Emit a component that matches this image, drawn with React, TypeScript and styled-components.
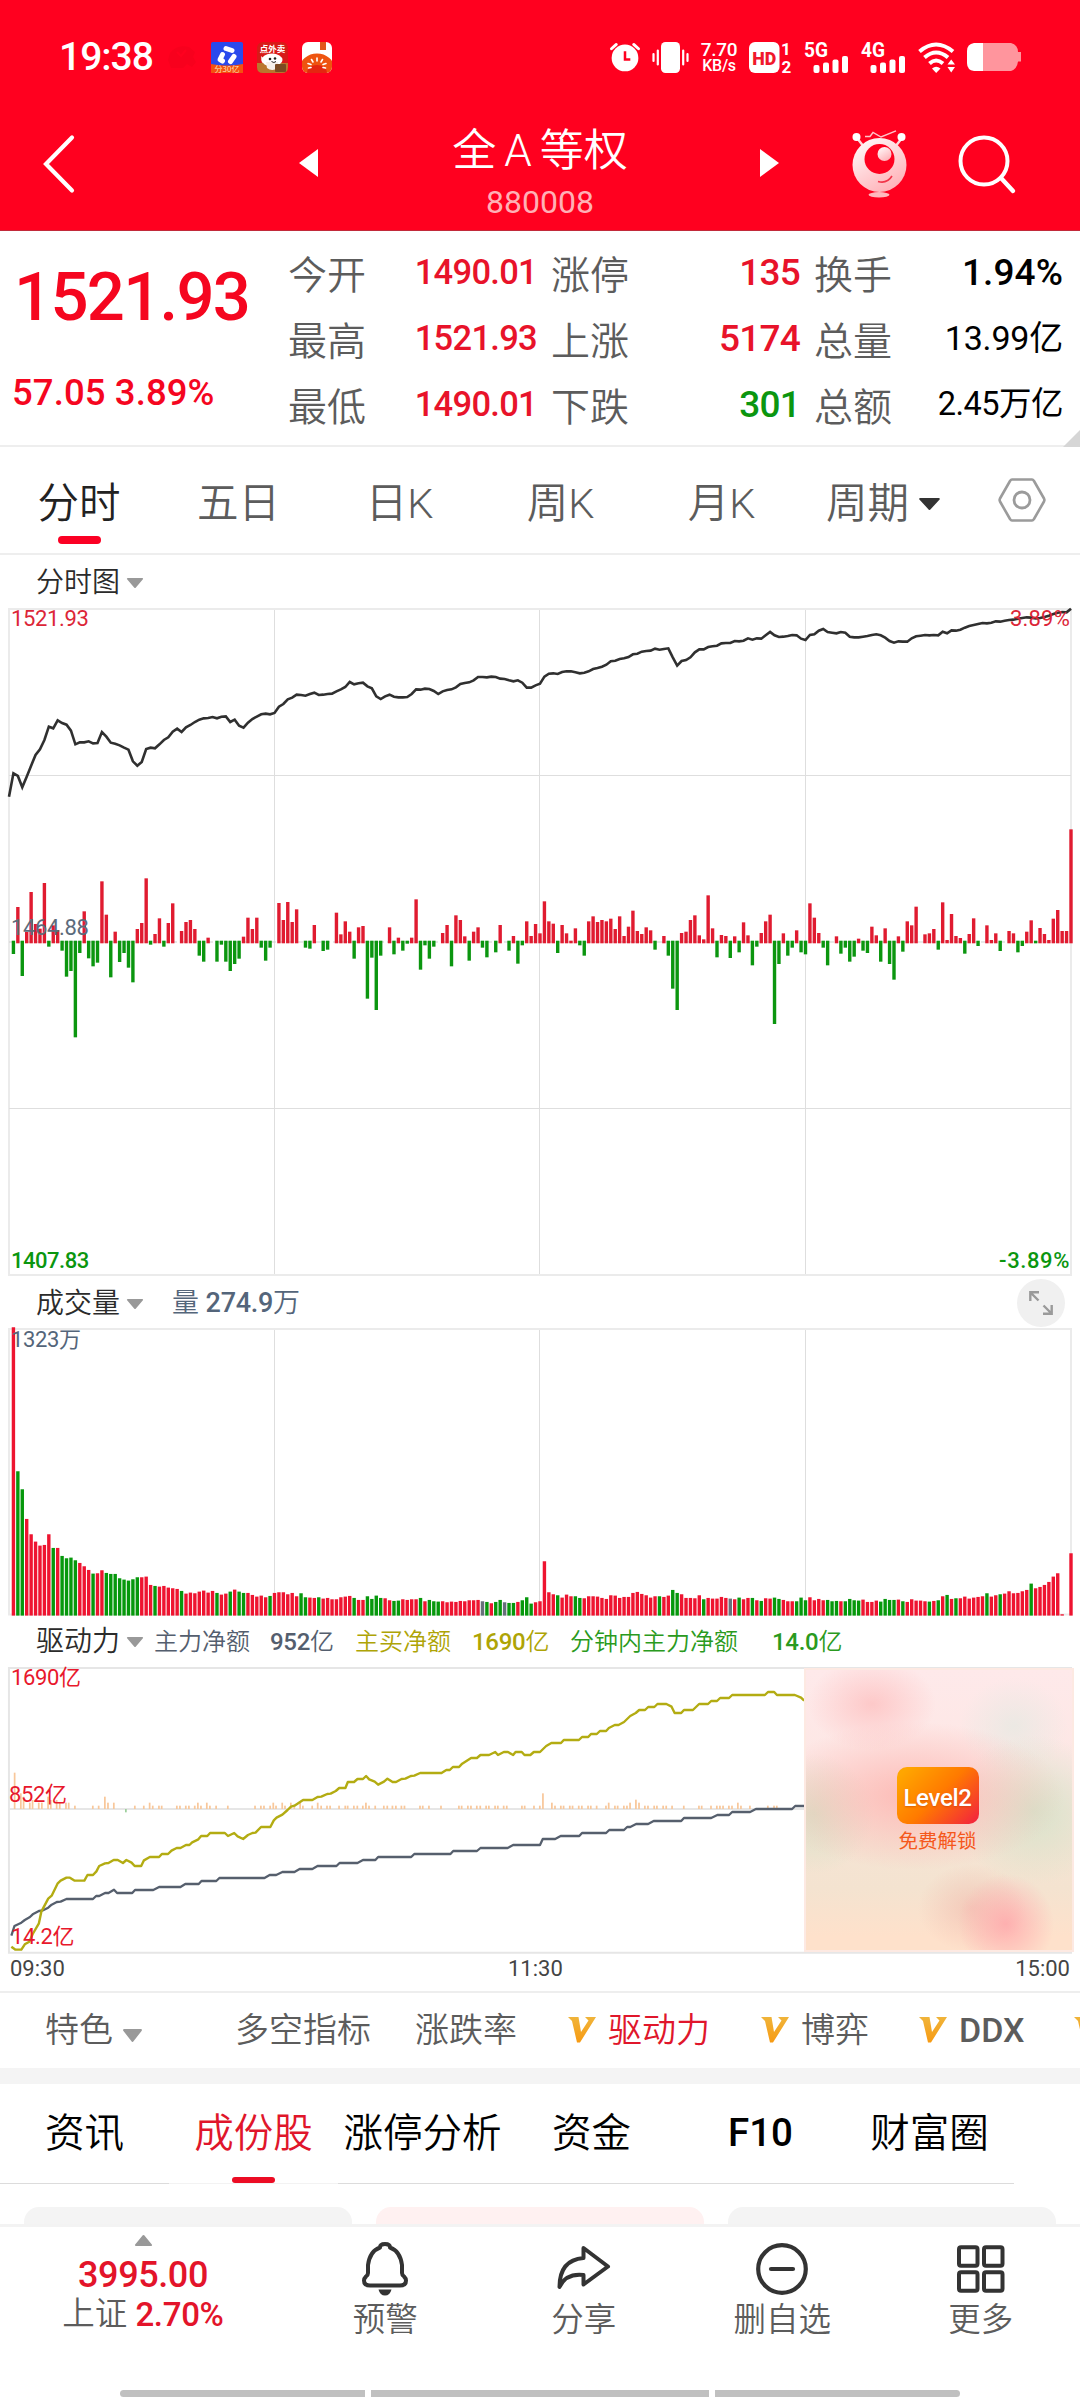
import React from "react";
import styled, { createGlobalStyle } from "styled-components";

const RED = "#e8132a";
const GREEN = "#0b960f";
const SLATE = "#54657a";

/* ------------------------------- chart data ------------------------------- */

const WIDTH = 1080;
const LEFT = 9;
const RIGHT = 1071;
const STEP = (RIGHT - LEFT) / 240;
const minuteX = (i: number) => LEFT + STEP * i;

const PRICE = [
  740, 670, 678, 712, 680, 647, 615, 598, 570, 530, 535, 511, 519, 524, 542, 583, 577, 577, 574, 580,
  579, 546, 560, 578, 581, 586, 593, 599, 634, 647, 636, 597, 593, 595, 583, 570, 562, 545, 536, 546,
  532, 525, 516, 509, 505, 504, 501, 505, 500, 499, 516, 509, 527, 533, 518, 507, 500, 493, 491, 493,
  489, 470, 462, 448, 443, 434, 435, 437, 432, 428, 435, 434, 432, 431, 424, 418, 411, 396, 403, 400,
  398, 409, 415, 439, 447, 439, 434, 440, 442, 442, 441, 432, 418, 419, 416, 417, 423, 432, 424, 420,
  418, 412, 402, 399, 397, 391, 381, 381, 382, 380, 381, 386, 387, 391, 394, 391, 398, 413, 413, 406,
  401, 380, 371, 370, 372, 366, 364, 364, 367, 370, 368, 364, 357, 354, 350, 344, 334, 332, 327, 325,
  321, 313, 311, 305, 303, 302, 296, 299, 297, 295, 322, 347, 333, 330, 322, 307, 298, 298, 291, 289,
  287, 280, 279, 279, 273, 274, 272, 265, 269, 265, 266, 256, 246, 256, 261, 260, 258, 255, 256, 266,
  270, 255, 253, 242, 237, 246, 248, 250, 246, 248, 260, 262, 262, 260, 258, 255, 253, 256, 263, 273,
  278, 274, 275, 275, 265, 259, 257, 255, 256, 255, 256, 245, 250, 241, 242, 239, 233, 228, 225, 222,
  219, 220, 218, 214, 215, 212, 210, 209, 206, 204, 202, 203, 205, 204, 201, 197, 192, 188, 186, 187,
  176,
];

const MOMENTUM = [
  0, -36, 105, -102, 30, 150, 54, 40, 177, -14, 50, 36, -26, -104, -87, -286, -33, 92, -49, -73,
  -62, 182, 82, -106, 31, -60, -33, -77, -121, 39, 57, 191, -8, 24, 71, -14, 57, 116, 0, 33,
  60, 66, 39, -41, -59, 13, 0, -59, -8, -59, -87, -66, -50, 16, 73, 39, 73, -17, -56, -17,
  0, 117, 66, 120, 60, 98, 0, -17, -20, 51, 0, -27, -23, 0, 88, 23, 62, 31, -50, 44,
  48, -170, -47, -204, -41, 0, 44, -37, 13, -26, -5, 13, 128, -83, -10, -50, -14, 0, 27, 51,
  -73, 80, 66, 17, -56, 31, 44, -17, -46, 0, -31, 51, 0, -26, 18, -65, -10, 62, 18, 54,
  26, 122, 62, 55, -33, 51, 26, 4, 41, -10, -41, 62, 77, 60, 66, 62, 70, 39, 77, 18,
  46, 94, 33, 24, 44, 35, -23, 0, 18, -41, -140, -204, 27, 31, 66, 80, 20, 8, 140, 41,
  -46, 21, 18, -48, 17, -31, 59, 20, -70, -14, 27, 62, 82, -246, -66, 26, -41, -17, 35, -31,
  -37, 116, 73, 27, -17, -70, 0, 17, -35, -17, -59, -44, 10, -26, -33, 46, 20, -59, 41, -66,
  -113, 17, -29, 62, 50, 106, 0, 23, 26, 39, -23, 119, 6, 84, 18, 12, -35, 24, 71, -12,
  0, 50, 6, 26, -27, 0, 33, 26, -31, -12, 31, 65, -4, 42, 24, 6, 70, 96, 33, 33,
  338,
];

const VOLUME =
  "r865 g433 g379 r290 r244 r222 r210 r212 r244 g203 r203 g179 g172 g174 g166 r158 r148 r137 g126 r127 " +
  "r136 g128 g125 g125 g112 g108 g105 g109 g115 r115 r117 r92 g89 r87 r89 r84 r82 r80 g74 r66 " +
  "r69 r67 r72 r75 r69 r74 g68 r63 r66 g72 r78 g72 g68 r68 r62 r57 r60 r55 g59 r68 " +
  "r70 r70 r64 r68 r58 g67 g55 r54 r53 g55 r51 r53 r49 r49 r55 r57 r59 g53 r47 r47 " +
  "g58 g50 g60 g53 r52 r46 g44 g45 r49 r47 r49 r49 g53 r43 g47 g43 g42 r43 r40 r42 " +
  "r41 r44 r43 r46 r46 r47 n43 g41 r37 g41 g47 n40 g38 g38 r41 g46 g55 g36 r40 r43 " +
  "r163 r70 r64 g61 r54 r63 r58 g58 g53 r52 r58 r58 r57 r53 r50 r61 r60 r53 r56 r56 " +
  "r68 r71 r65 r61 r54 r58 g58 r56 r60 g77 g68 r64 r53 r53 r52 r61 g49 r53 r51 r51 " +
  "r56 r53 n51 r49 g54 r49 r53 g53 r46 g44 r52 r51 g54 g50 r47 r43 r43 g43 g54 g46 " +
  "r55 r46 r50 r46 g47 g43 g44 r43 g43 g50 g46 g45 r48 r41 r41 r45 g42 g50 g47 g47 " +
  "r48 g43 r41 r49 r45 r45 r43 g42 r44 g46 r58 g62 r50 g52 r52 r57 r51 r54 r56 r58 " +
  "g67 r57 r61 g64 r66 r73 r67 r68 r73 r77 g96 r82 r86 r92 r101 r117 r127 r4 r0 r187";

const MAIN_BUY =
  "33,1010 45,1019 62,1019 72,1003 85,995 95,972 113,940 120,905 140,866 150,857 167,821 176,812 193,803 203,803 217,812 245,812 254,795 270,795 280,784 288,768 305,760 315,759 330,750 342,750 357,759 367,750 382,758 391,768 410,768 418,751 435,741 462,741 470,732 488,732 498,722 513,714 524,714 540,705 550,705 558,697 576,688 584,678 602,678 610,669 653,669 662,678 680,669 690,679 706,687 720,675 733,669 742,668 758,651 785,651 795,631 803,623 820,614 835,600 845,590 855,587 880,570 907,570 922,561 933,560 950,552 960,551 975,543 985,534 1003,534 1010,516 1028,516 1038,507 1054,507 1063,498 1072,508 1088,515 1098,524 1115,515 1125,506 1140,516 1150,516 1166,507 1177,506 1193,498 1203,497 1220,489 1282,489 1296,480 1306,480 1315,471 1333,471 1342,461 1368,444 1385,444 1395,435 1420,435 1438,426 1446,435 1463,426 1475,426 1490,435 1497,426 1515,426 1523,435 1540,435 1550,426 1568,426 1586,408 1601,399 1629,399 1637,390 1681,390 1690,381 1708,381 1716,372 1733,372 1742,363 1760,363 1768,354 1785,345 1796,345 1812,336 1830,318 1846,309 1856,300 1873,300 1882,291 1900,291 1909,282 1935,282 1950,290 1959,309 1978,309 1986,300 2012,300 2030,282 2056,282 2065,273 2082,273 2091,264 2117,264 2126,255 2221,255 2230,246 2248,246 2256,255 2308,255 2326,263 2335,272";

const MAIN_FLOW =
  "33,977 42,948 62,938 72,930 87,921 95,913 113,903 125,901 140,893 150,884 165,876 176,875 193,867 270,867 279,858 288,858 305,849 315,849 331,839 340,849 384,849 392,840 445,840 462,831 524,831 538,822 577,822 585,813 628,813 637,804 768,804 783,795 802,795 820,786 855,786 870,777 907,777 922,768 977,768 986,759 1038,759 1054,750 1090,750 1098,741 1194,741 1203,732 1308,732 1316,723 1385,723 1395,714 1474,714 1490,705 1568,705 1576,687 1612,687 1628,678 1682,678 1690,669 1760,669 1769,660 1812,660 1821,651 1830,651 1847,642 1882,642 1898,633 1978,633 1986,624 2065,624 2083,615 2117,615 2126,606 2178,606 2195,597 2300,597 2309,588 2335,588";

/* x:height pairs of the per-minute net inflow, default height 10 */
const INFLOW =
  "43:109 61:47 69:37 87:19 95:27 113:19 122:19 140:37 148:27 165:27 174:19 192:19 200:19 218 270 287 305:37 314:19 331:19 392 418 435:19 444 462 470 514 523 540 549 566 575:19 584 601:19 610 628 662 741 758 767 785 794:19 802 820:19 828 845:19 855 872:19 880 907 923:19 933 950 959 985 1003 1010 1028 1038 1054 1063:19 1072 1090 1115 1125 1140 1150 1166 1175 1220 1228 1246 1281 1333 1341 1359 1368 1385 1395 1412 1420 1438 1446 1463 1472 1516 1524 1551 1568 1577:47 1603:19 1612 1629 1637 1655 1663 1681 1690 1708 1716 1733 1760 1768:19 1786 1794 1812 1821 1830:19 1847:28 1856:19 1873 1882 1900 1908 1926 1935 1952 1986 2030 2038 2065 2082 2091 2100 2117 2126 2143:19 2152 2178 2230 2248 2256";

/* --------------------------------- styles --------------------------------- */

const Global = createGlobalStyle`
  html, body { margin: 0; padding: 0; background: #fff; }
  *, *::before, *::after { box-sizing: border-box; }
  svg { display: block; flex: none; overflow: visible; }
`;

const Page = styled.div`
  width: ${WIDTH}px;
  height: 2400px;
  overflow: hidden;
  background: #fff;
  display: flex;
  flex-direction: column;
  font-family: Roboto, "Noto Sans CJK SC", sans-serif;
  font-weight: 350;
  line-height: 1;
  white-space: nowrap;
  color: #333;
`;

const Header = styled.header`
  flex: none;
  height: 231px;
  background: #ff001f;
  border-bottom: 1px solid #c22a3a;
  color: #fff;
`;

const StatusBar = styled.div`
  height: 86px;
  padding: 28px 59px 0 59px;
  display: flex;
  justify-content: space-between;
`;

const StatusGroup = styled.div<{ $gap: number }>`
  display: flex;
  align-items: center;
  height: 58px;
  gap: ${(p) => p.$gap}px;
`;

const Clock = styled.span`
  width: 93px;
  font-size: 39px;
  font-weight: 500;
  letter-spacing: -1px;
  margin-right: 1px;
`;

const NetSpeed = styled.div`
  width: 37px;
  display: flex;
  flex-direction: column;
  align-items: center;
  gap: 2px;
  font-weight: 500;
  font-size: 19px;
  line-height: 15px;
  letter-spacing: -0.3px;
`;

const NetUnit = styled.span`
  font-size: 16px;
  line-height: 14px;
`;

const TitleBar = styled.div`
  height: 144px;
  display: grid;
  grid-template-columns: 299px 152px 178px 150px 128px 173px;
  align-items: start;
`;

const IconSlot = styled.div<{ $top: number; $left?: number; $align?: string }>`
  padding-top: ${(p) => p.$top}px;
  padding-left: ${(p) => p.$left ?? 0}px;
  display: flex;
  justify-content: ${(p) => p.$align ?? "flex-start"};
`;

const TitleBlock = styled.div`
  display: flex;
  flex-direction: column;
  align-items: center;
  padding-top: 43px;
`;

const Title = styled.h1`
  margin: 0;
  font-size: 44px;
  font-weight: 350;
  display: flex;
  gap: 8px;
`;

const Code = styled.span`
  margin-top: 13px;
  font-size: 32px;
  font-weight: 400;
  color: #ffb0b6;
`;

const Quote = styled.section`
  position: relative;
  flex: none;
  height: 216px;
  border-bottom: 2px solid #eee;
  display: flex;
`;

const LastPrice = styled.div`
  width: 288px;
  padding: 33px 0 0 12px;
  color: #f5061f;
`;

const BigNumber = styled.div`
  font-size: 67px;
  font-weight: 500;
  letter-spacing: -1.7px;
  padding-left: 2px;
`;

const Change = styled.div`
  margin-top: 44px;
  font-size: 36.5px;
  font-weight: 500;
  letter-spacing: 0.1px;
`;

const Facts = styled.div`
  width: 775px;
  padding-top: 9px;
  display: grid;
  grid-template-columns: repeat(3, 249px);
  grid-auto-rows: 66px;
  column-gap: 14px;
`;

const Fact = styled.div`
  display: flex;
  justify-content: space-between;
  align-items: center;
`;

const FactLabel = styled.span`
  font-size: 39px;
  color: #5c5c5c;
  padding-top: 6px;
`;

const FactValue = styled.span<{ $color: string; $size: number; $weight?: number; $ls?: number }>`
  font-size: ${(p) => p.$size}px;
  font-weight: ${(p) => p.$weight ?? 400};
  color: ${(p) => p.$color};
  letter-spacing: ${(p) => p.$ls ?? 0}px;
  padding-bottom: 2px;
`;

const Corner = styled.i`
  position: absolute;
  right: 0;
  bottom: -2px;
  border-style: solid;
  border-width: 0 0 17px 17px;
  border-color: transparent transparent #d6d6d6 transparent;
`;

const PeriodTabs = styled.nav`
  flex: none;
  height: 108px;
  border-bottom: 2px solid #eee;
  display: grid;
  grid-template-columns: 158px repeat(4, 161px) 163px 115px;
`;

const PeriodTab = styled.div<{ $active?: boolean }>`
  display: flex;
  flex-direction: column;
  align-items: center;
  padding-top: 36px;
  font-size: 41.5px;
  color: ${(p) => (p.$active ? "#222" : "#5c5c5c")};
`;

const Inline = styled.span<{ $gap: number }>`
  display: flex;
  align-items: center;
  gap: ${(p) => p.$gap}px;
`;

const TabMark = styled.i<{ $top: number; $h: number; $color: string }>`
  width: 43px;
  height: ${(p) => p.$h}px;
  margin-top: ${(p) => p.$top}px;
  border-radius: 4px;
  background: ${(p) => p.$color};
`;

const ChartTitle = styled.div<{ $h: number; $top?: number }>`
  flex: none;
  height: ${(p) => p.$h}px;
  padding: ${(p) => p.$top ?? 3}px 15px 0 36px;
  display: flex;
  align-items: center;
  color: #2b2b2b;
  font-size: 28px;
`;

const DropMark = styled.span`
  margin: 0 0 0 6px;
`;

const Legend = styled.span<{ $color: string; $size: number; $gap: number; $width?: number }>`
  margin-left: ${(p) => p.$gap}px;
  width: ${(p) => (p.$width ? `${p.$width}px` : "auto")};
  font-size: ${(p) => p.$size}px;
  color: ${(p) => p.$color};
`;

const Strong = styled.b`
  font-weight: 500;
  letter-spacing: -0.3px;
`;

const Expand = styled.button`
  margin: -2px 0 0 auto;
  width: 48px;
  height: 48px;
  padding: 0;
  border: 0;
  border-radius: 50%;
  background: #f0f0f0;
  display: grid;
  place-items: center;
`;

const ChartBox = styled.div<{ $h: number }>`
  flex: none;
  position: relative;
  height: ${(p) => p.$h}px;
`;

const ChartLabel = styled.span<{ $y: number; $color: string; $x?: number; $right?: boolean; $weight?: number; $ls?: number }>`
  position: absolute;
  top: ${(p) => p.$y - 11}px;
  ${(p) => (p.$right ? "right: 10px;" : `left: ${p.$x ?? 11}px;`)}
  font-size: 22px;
  font-weight: ${(p) => p.$weight ?? 400};
  letter-spacing: ${(p) => p.$ls ?? -0.35}px;
  color: ${(p) => p.$color};
`;

const Unlock = styled.div`
  position: absolute;
  left: 804px;
  top: 1px;
  width: 270px;
  height: 284px;
  border: 2px solid #fde9e2;
  display: flex;
  flex-direction: column;
  align-items: center;
  padding-top: 97px;
  padding-right: 3px;
  color: #f5581c;
  font-size: 19.5px;
  font-weight: 400;
  background:
    radial-gradient(ellipse 48px 50px at 200px 254px, rgba(255, 165, 170, 0.8), transparent),
    radial-gradient(ellipse 54px 44px at 166px 238px, rgba(240, 180, 168, 0.55), transparent),
    radial-gradient(ellipse 64px 46px at 66px 34px, rgba(253, 190, 190, 0.75), transparent),
    radial-gradient(ellipse 150px 74px at 108px 126px, rgba(253, 182, 178, 0.9), transparent),
    radial-gradient(ellipse 80px 75px at 228px 140px, rgba(212, 226, 200, 0.9), transparent),
    radial-gradient(ellipse 60px 60px at 8px 144px, rgba(214, 224, 196, 0.9), transparent),
    radial-gradient(ellipse 54px 48px at 208px 56px, rgba(228, 233, 226, 0.7), transparent),
    linear-gradient(#fee9ea 0%, #fde7e4 35%, #f5e4d4 62%, #f4e3d0 78%, #fee1cb 95%);
`;

const LevelBadge = styled.div`
  width: 82px;
  height: 57px;
  margin-bottom: 8px;
  border-radius: 10px;
  display: grid;
  place-items: center;
  padding-top: 4px;
  color: #fff;
  font-size: 24px;
  font-weight: 500;
  letter-spacing: -0.3px;
  background: linear-gradient(135deg, #ffa600 8%, #ff7a00 50%, #f3263c 96%);
  text-shadow: 0 1px 2px rgba(190, 60, 0, 0.5);
`;

const TimeAxis = styled.div`
  flex: none;
  height: 39px;
  padding: 4px 10px 0;
  border-bottom: 2px solid #eee;
  display: grid;
  grid-template-columns: 498px 1fr auto;
  font-size: 22px;
  font-weight: 400;
  color: #444;
`;

const FeatureBar = styled.div`
  flex: none;
  height: 75px;
  padding: 0 0 1px 45px;
  display: flex;
  align-items: center;
  overflow: hidden;
  font-size: 34px;
  color: #5c5c5c;
`;

const Feature = styled.span<{ $gap: number; $color?: string; $weight?: number }>`
  flex: none;
  display: flex;
  align-items: center;
  gap: 12px;
  margin-left: ${(p) => p.$gap}px;
  color: ${(p) => p.$color ?? "inherit"};
  font-weight: ${(p) => p.$weight ?? 350};
`;

const Divider = styled.i`
  width: 2px;
  height: 41px;
  margin-left: 46px;
  background: #eee;
`;

const Band = styled.div`
  flex: none;
  height: 16px;
  background: #f4f4f4;
`;

const SectionTabs = styled.nav`
  flex: none;
  height: 100px;
  width: 1014px;
  display: grid;
  grid-template-columns: repeat(6, 169px);
`;

const SectionTab = styled.div<{ $active?: boolean; $bold?: boolean }>`
  display: flex;
  flex-direction: column;
  justify-content: space-between;
  align-items: center;
  padding-top: 30px;
  font-size: ${(p) => (p.$bold ? 38.5 : 39.5)}px;
  font-weight: ${(p) => (p.$bold ? 500 : 350)};
  color: ${(p) => (p.$active ? "#e0162b" : "#000")};
  border-bottom: 1px solid ${(p) => (p.$active ? "#f3f3f3" : "#dcdcdc")};
`;

const Cards = styled.div`
  flex: none;
  height: 40px;
  padding: 23px 24px 0;
  display: grid;
  grid-template-columns: repeat(3, 328px);
  gap: 24px;
`;

const Card = styled.div<{ $tint: string }>`
  border-radius: 15px 15px 0 0;
  background: ${(p) => p.$tint};
`;

const BottomNav = styled.nav`
  flex: none;
  height: 166px;
  border-top: 3px solid #f3f3f3;
  display: grid;
  grid-template-columns: 286px repeat(4, 198.5px);
`;

const NavItem = styled.div`
  display: flex;
  flex-direction: column;
  align-items: center;
  padding-top: 13px;
  font-size: 32.5px;
  color: #5c5c5c;
`;

const NavIcon = styled.span`
  height: 58px;
  margin-bottom: 6px;
  display: flex;
  align-items: center;
`;

const IndexQuote = styled.div`
  display: flex;
  flex-direction: column;
  align-items: center;
  padding-top: 8px;
  font-size: 32.5px;
  color: #5c5c5c;
`;

const IndexValue = styled.span`
  margin: 11px 0 5px;
  font-size: 36px;
  font-weight: 500;
  color: #e3142a;
  letter-spacing: -0.4px;
`;

const IndexChange = styled.span`
  font-size: 33px;
  font-weight: 500;
  letter-spacing: -0.3px;
  color: #e3142a;
`;

const HomeBars = styled.div`
  flex: none;
  height: 7px;
  padding: 0 120px;
  display: grid;
  grid-template-columns: 245px 338px 245px;
  gap: 6px;
`;

const HomeBar = styled.i<{ $radius: string }>`
  background: #c0c0c0;
  border-radius: ${(p) => p.$radius};
`;

/* ---------------------------------- icons --------------------------------- */

const Triangle = ({ w, h, color, up }: { w: number; h: number; color: string; up?: boolean }) => (
  <svg width={w} height={h} viewBox="0 0 20 12" preserveAspectRatio="none">
    <path
      d="M2 1H18L10 11Z"
      fill={color}
      stroke={color}
      strokeWidth="2"
      strokeLinejoin="round"
      transform={up ? "rotate(180 10 6)" : undefined}
    />
  </svg>
);

const SideArrow = ({ flip }: { flip?: boolean }) => (
  <svg width="19" height="28" viewBox="0 0 19 28">
    <path d={flip ? "M0 0L19 14L0 28Z" : "M19 0L0 14L19 28Z"} fill="#fff" />
  </svg>
);

const GhostApp = () => (
  <svg width="30" height="26" viewBox="0 0 30 26">
    <path d="M3 9Q10 0 22 3L28 8L26 13L29 18L25 23L20 20L16 24H4L1 16Z" fill="#f8001d" />
    <path d="M10 8L14 12L19 6" stroke="#ff001f" strokeWidth="2" fill="none" />
  </svg>
);

const BlueApp = () => (
  <svg width="32" height="31" viewBox="0 0 32 31">
    <rect width="32" height="31" rx="2" fill="#2a49ec" />
    <path d="M0 22Q16 25 32 22V31H0Z" fill="#f5500f" />
    <g stroke="#fff" strokeWidth="5" strokeLinecap="round" strokeLinejoin="round" fill="none">
      <path d="M15 6.500L21 8.500" />
      <path d="M11.500 12.500L9 17.500L11.500 19" />
      <path d="M23 14.500L19.500 19.500" />
    </g>
    <text x="16" y="30" fontSize="8" fill="#ffe9c0" textAnchor="middle" fontFamily="Noto Sans CJK SC">分30亿</text>
  </svg>
);

const FoodApp = () => (
  <svg width="31" height="31" viewBox="0 0 31 31">
    <rect width="31" height="31" rx="6" fill="#d81a18" />
    <path d="M0 21H31V25Q31 31 25 31H6Q0 31 0 25Z" fill="#b9772e" />
    <ellipse cx="15" cy="18" rx="10.500" ry="6.500" fill="#fff" />
    <path d="M9 20H21V26Q15 30 10 26Z" fill="#f6f0ea" />
    <path d="M4 14L8 18L5 21Z" fill="#fff" />
    <circle cx="13" cy="17" r="1.300" fill="#222" />
    <circle cx="18" cy="16.500" r="1.300" fill="#222" />
    <path d="M14.500 19.500Q17 21.500 19 19.500" stroke="#222" fill="none" />
    <rect x="18" y="22" width="11" height="8" rx="1" fill="#7b4a22" />
    <text x="15.500" y="9.500" fontSize="8.500" fontWeight="700" fill="#fff" textAnchor="middle" fontFamily="Noto Sans CJK SC">点外卖</text>
  </svg>
);

const TomatoApp = () => (
  <svg width="30" height="31" viewBox="0 0 30 31">
    <defs>
      <clipPath id="tomato">
        <rect width="30" height="31" rx="6" />
      </clipPath>
    </defs>
    <g clipPath="url(#tomato)">
      <rect width="30" height="31" fill="#fff" />
      <rect x="18" y="0" width="6" height="8" fill="#e2571c" />
      <ellipse cx="15" cy="26" rx="17" ry="14.500" fill="#ee5410" />
      <ellipse cx="15" cy="31" rx="10" ry="8" fill="#e42610" />
      <g stroke="#fff" strokeWidth="1.600" strokeLinecap="round">
        <path d="M15 16V19M9.500 17.500L11 20M20.500 17.500L19 20M6 21.500L9 22.500M24 21.500L21 22.500M6.500 26L9 25.500M23.500 26L21 25.500" />
      </g>
    </g>
  </svg>
);

const AlarmIcon = () => (
  <svg width="30" height="30" viewBox="0 0 31 30">
    <circle cx="15.500" cy="16" r="13.800" fill="#fff" />
    <path d="M1.500 6.500L6.500 2M29.500 6.500L24.500 2" stroke="#fff" strokeWidth="3" strokeLinecap="round" />
    <path d="M15.500 9V17.500H21" stroke="#ff001f" strokeWidth="2.600" fill="none" />
  </svg>
);

const VibrateIcon = () => (
  <svg width="37" height="31" viewBox="0 0 37 31">
    <rect x="9" y="0" width="19" height="31" rx="4.500" fill="#fff" />
    <path d="M5.800 8.500V22.500M1.500 12V19M31.200 8.500V22.500M35.500 12V19" stroke="#fff" strokeWidth="2.200" strokeLinecap="round" />
  </svg>
);

const HdIcon = () => (
  <svg width="43" height="31" viewBox="0 0 43 31">
    <rect width="30.500" height="31" rx="6" fill="#fff" />
    <g fill="#f0182c" fontFamily="Roboto" fontWeight="900">
      <text x="15.200" y="22.500" fontSize="19" textAnchor="middle" textLength="24" lengthAdjust="spacingAndGlyphs">HD</text>
    </g>
    <g fill="#fff" fontFamily="Roboto" fontWeight="700" fontSize="17" textAnchor="middle">
      <text x="37" y="12.500">1</text>
      <text x="37.500" y="30.500">2</text>
    </g>
  </svg>
);

const SignalIcon = ({ label }: { label: string }) => (
  <svg width="45" height="31" viewBox="0 0 45 31">
    <text x="0" y="14.500" fontFamily="Roboto" fontSize="19.500" fontWeight="700" fill="#fff" textLength="24" lengthAdjust="spacingAndGlyphs">
      {label}
    </text>
    <g fill="#fff">
      <rect x="9.500" y="23" width="6" height="8" rx="2" />
      <rect x="19" y="20.500" width="6" height="10.500" rx="2" />
      <rect x="28.500" y="17.500" width="6" height="13.500" rx="2" />
      <rect x="38" y="14" width="6" height="17" rx="2" />
    </g>
  </svg>
);

const WifiIcon = () => (
  <svg width="37" height="31" viewBox="0 0 37 31">
    <g fill="none" stroke="#fff" strokeWidth="4">
      <path d="M1.500 9.500Q18 -4.500 35 9.500" />
      <path d="M6.500 15.500Q18 5.500 30 15.500" />
      <path d="M11.500 21.500Q18 15.500 25 21.500" />
    </g>
    <path d="M14 26.500Q18 23 22.500 26.500L18.200 31Z" fill="#fff" />
    <path d="M29.500 22.500L33.200 17.500L37 22.500ZM29.500 25L33.200 30.500L37 25Z" fill="#fff" />
  </svg>
);

const BatteryIcon = () => (
  <svg width="54" height="28" viewBox="0 0 54 28">
    <path d="M16 0H44Q51 2 51 9H54V18.500H51Q50 26 44 28H16Z" fill="#ff959d" />
    <path d="M7 0H16V28H7Q0 27 0 20V8Q0 1 7 0Z" fill="#fff" />
  </svg>
);

const BackIcon = () => (
  <svg width="32" height="58" viewBox="0 0 32 58">
    <path d="M29 2.500L3 29L29 55.500" fill="none" stroke="#fff" strokeWidth="4.200" strokeLinecap="round" />
  </svg>
);

const RobotIcon = () => (
  <svg width="55" height="68" viewBox="0 0 55 68">
    <defs>
      <linearGradient id="robot" x1="0" y1="0" x2="0.600" y2="1">
        <stop offset="0" stopColor="#fff" />
        <stop offset="1" stopColor="#ffb4ba" />
      </linearGradient>
    </defs>
    <path d="M5 8L12 17M50 8L43 17" stroke="#ffd9dc" strokeWidth="2.400" />
    <circle cx="4.500" cy="7" r="4" fill="#fff" />
    <circle cx="49.500" cy="7" r="4" fill="#fff" />
    <path d="M13 6.500H18L21 2.500L29 7L44 .8" fill="none" stroke="#ffc5ca" strokeWidth="1.400" />
    <circle cx="27.500" cy="35" r="27" fill="url(#robot)" />
    <circle cx="27.500" cy="29" r="15" fill="#ff001f" />
    <circle cx="32.500" cy="24" r="7" fill="url(#robot)" />
    <path d="M26 51.500Q35 54 40 46" fill="none" stroke="#f23448" strokeWidth="1.600" />
    <ellipse cx="27" cy="64.800" rx="10.500" ry="2.700" fill="#ffb9be" />
  </svg>
);

const SearchIcon = () => (
  <svg width="58" height="60" viewBox="0 0 58 60">
    <circle cx="26" cy="26" r="23.500" fill="none" stroke="#fff" strokeWidth="4" />
    <path d="M43 43L55 56" stroke="#fff" strokeWidth="4.400" strokeLinecap="round" />
  </svg>
);

const HexIcon = () => (
  <svg width="48" height="44" viewBox="0 0 48 44">
    <path d="M14 1.500H34Q35 1.500 36 3L46 20.500Q46.800 22 46 23.500L36 41Q35 42.500 34 42.500H14Q13 42.500 12 41L2 23.500Q1.200 22 2 20.500L12 3Q13 1.500 14 1.500Z" fill="none" stroke="#9b9b9b" strokeWidth="2.600" />
    <circle cx="24" cy="22" r="8" fill="none" stroke="#9b9b9b" strokeWidth="2.800" />
  </svg>
);

const ExpandIcon = () => (
  <svg width="26" height="26" viewBox="0 0 26 26">
    <path d="M11 2.300H2.300V11M3 3L10.500 10.500M15 23.700H23.700V15M23 23L15.500 15.500" fill="none" stroke="#9a9a9a" strokeWidth="2.400" />
  </svg>
);

const VipIcon = () => (
  <svg width="28" height="26" viewBox="0 0 28 26">
    <defs>
      <linearGradient id="vip" x1="0" y1="0" x2="0" y2="1">
        <stop offset="0" stopColor="#f0b43a" />
        <stop offset="1" stopColor="#f79a12" />
      </linearGradient>
    </defs>
    <path d="M0 0H10.500L13 15L20.500 3.500L17 0H28L12 25.500H9L4 4Z" fill="url(#vip)" />
  </svg>
);

const BellIcon = () => (
  <svg width="46" height="54" viewBox="0 0 46 54">
    <path d="M18 5.500Q18 2 23 2Q28 2 28 5.500Q38 9 40 23V31Q40 33 42 34.500Q44 36.500 44 38.500Q44 43.500 38 43.500H8Q2 43.500 2 38.500Q2 36.500 4 34.500Q6 33 6 31V23Q8 9 18 5.500Z" fill="none" stroke="#333" strokeWidth="4" strokeLinejoin="round" />
    <path d="M16.500 47.500H29.500Q28 53.500 23 53.500Q18 53.500 16.500 47.500Z" fill="#333" />
  </svg>
);

const ShareIcon = () => (
  <svg width="54" height="48" viewBox="0 0 54 48">
    <path d="M26.500 3L51 21.500L26.500 39.500V30Q9 28 2.500 42Q2.500 15 26.500 13Z" fill="none" stroke="#333" strokeWidth="4" strokeLinejoin="round" />
  </svg>
);

const MinusIcon = () => (
  <svg width="52" height="52" viewBox="0 0 52 52">
    <circle cx="26" cy="26" r="23.800" fill="none" stroke="#333" strokeWidth="4.200" />
    <path d="M15 26H37" stroke="#333" strokeWidth="4.200" strokeLinecap="round" />
  </svg>
);

const MoreIcon = () => (
  <svg width="48" height="48" viewBox="0 0 48 48" fill="none" stroke="#333" strokeWidth="4">
    <rect x="2" y="2.300" width="18.500" height="18.500" rx="2" />
    <rect x="27" y="2.300" width="18.500" height="18.500" rx="2" />
    <rect x="2" y="27.300" width="18.500" height="18.500" rx="2" />
    <rect x="27" y="27.300" width="18.500" height="18.500" rx="2" />
  </svg>
);

/* --------------------------------- charts --------------------------------- */

const Frame = ({ top, bottom }: { top: number; bottom: number }) => (
  <g fill="none">
    <path
      d={[60, 120, 180].map((m) => `M${Math.floor(minuteX(m) - 0.1) + 0.5} ${top}V${bottom}`).join("")}
      stroke="#dedede"
      strokeWidth="1"
    />
    <rect x={LEFT} y={top} width={RIGHT - LEFT} height={bottom - top} stroke="#ebebeb" strokeWidth="2" />
  </g>
);

const PriceChart = () => {
  const y = (v: number) => (v - 174) / 3;
  const zero = 334;
  return (
    <svg width={WIDTH} height="668">
      <Frame top={1} bottom={667} />
      <path d={`M${LEFT} 167.500H${RIGHT}M${LEFT} 500.500H${RIGHT}`} stroke="#dedede" />
      <path d={`M${LEFT} ${zero}H${RIGHT}`} stroke="#cfcfcf" strokeDasharray="6 3" />
      {MOMENTUM.map((v, i) =>
        v === 0 ? null : v > 0 ? (
          <rect key={i} x={minuteX(i) - 1.7} y={zero - v / 3} width="3.400" height={v / 3 + 1.3} fill="#e01b30" />
        ) : (
          <rect key={i} x={minuteX(i) - 1.7} y={zero - 1.3} width="3.400" height={-v / 3 + 1.3} fill={GREEN} />
        )
      )}
      <polyline
        points={PRICE.map((v, i) => `${minuteX(i)},${y(v)}`).join(" ")}
        fill="none"
        stroke="#303030"
        strokeWidth="2.600"
      />
    </svg>
  );
};

const VolumeChart = () => {
  const base = 287.6;
  const colors: Record<string, string> = { r: "#ee1430", g: "#06980c", n: "#66707a" };
  return (
    <svg width={WIDTH} height="288">
      <Frame top={1} bottom={286.5} />
      {VOLUME.split(" ").map((s, i) => {
        const h = Number(s.slice(1)) / 3;
        return <rect key={i} x={minuteX(i + 1) - 1.7} y={base - h} width="3.400" height={h} fill={colors[s[0]]} />;
      })}
    </svg>
  );
};

const FlowChart = () => (
  <svg width={WIDTH} height="287" viewBox="0 171 3136 861" preserveAspectRatio="none">
    <g fill="none" stroke="#e6e6e6" strokeWidth="2">
      <path vectorEffect="non-scaling-stroke" d="M26 174H3110V1028H26ZM26 597H2335" />
    </g>
    {INFLOW.split(" ").map((s) => {
      const [x, h = "10"] = s.split(":");
      return <rect key={x} x={Number(x) - 3} y={597 - Number(h)} width="5" height={h} fill="#f8c79a" />;
    })}
    <rect x="363" y="597" width="5" height="10" fill="#9ccf9c" />
    <g fill="none" strokeLinejoin="round">
      <polyline vectorEffect="non-scaling-stroke" points={MAIN_FLOW} stroke="#565f6d" strokeWidth="2.300" />
      <polyline vectorEffect="non-scaling-stroke" points={MAIN_BUY} stroke="#b3ac12" strokeWidth="2.400" />
    </g>
  </svg>
);

/* ----------------------------------- app ---------------------------------- */

const FACTS = [
  { label: "今开", value: "1490.01", color: RED, size: 34.5, ls: -0.7, weight: 500 },
  { label: "涨停", value: "135", color: RED, size: 37, ls: -0.8, weight: 500 },
  { label: "换手", value: "1.94%", color: "#000", size: 37, ls: 0.1, weight: 500 },
  { label: "最高", value: "1521.93", color: RED, size: 34.5, ls: -0.7, weight: 500 },
  { label: "上涨", value: "5174", color: RED, size: 37, ls: -0.8, weight: 500 },
  { label: "总量", value: "13.99亿", color: "#000", size: 34, ls: -0.2, weight: 400 },
  { label: "最低", value: "1490.01", color: RED, size: 34.5, ls: -0.7, weight: 500 },
  { label: "下跌", value: "301", color: GREEN, size: 37, ls: -0.8, weight: 500 },
  { label: "总额", value: "2.45万亿", color: "#000", size: 32.5, ls: -0.5, weight: 400 },
];

const SECTIONS = ["资讯", "成份股", "涨停分析", "资金", "F10", "财富圈"];

const ACTIONS = [
  { label: "预警", icon: <BellIcon /> },
  { label: "分享", icon: <ShareIcon /> },
  { label: "删自选", icon: <MinusIcon /> },
  { label: "更多", icon: <MoreIcon /> },
];

const App = () => (
  <Page lang="zh-CN">
    <Global />
    <Header>
      <StatusBar>
        <StatusGroup $gap={14}>
          <Clock>19:38</Clock>
          <GhostApp />
          <BlueApp />
          <FoodApp />
          <TomatoApp />
        </StatusGroup>
        <StatusGroup $gap={11.9}>
          <AlarmIcon />
          <VibrateIcon />
          <NetSpeed>
            <span>7.70</span>
            <NetUnit>KB/s</NetUnit>
          </NetSpeed>
          <HdIcon />
          <SignalIcon label="5G" />
          <SignalIcon label="4G" />
          <WifiIcon />
          <BatteryIcon />
        </StatusGroup>
      </StatusBar>
      <TitleBar>
        <IconSlot $top={49} $left={43}>
          <BackIcon />
        </IconSlot>
        <IconSlot $top={63}>
          <SideArrow />
        </IconSlot>
        <TitleBlock>
          <Title>
            <span>全</span>
            <span>A</span>
            <span>等权</span>
          </Title>
          <Code>880008</Code>
        </TitleBlock>
        <IconSlot $top={63} $align="flex-end">
          <SideArrow flip />
        </IconSlot>
        <IconSlot $top={44} $align="flex-end">
          <RobotIcon />
        </IconSlot>
        <IconSlot $top={49} $left={51}>
          <SearchIcon />
        </IconSlot>
      </TitleBar>
    </Header>

    <Quote>
      <LastPrice>
        <BigNumber>1521.93</BigNumber>
        <Change>57.05 3.89%</Change>
      </LastPrice>
      <Facts>
        {FACTS.map((f) => (
          <Fact key={f.label}>
            <FactLabel>{f.label}</FactLabel>
            <FactValue $color={f.color} $size={f.size} $weight={f.weight} $ls={f.ls}>
              {f.value}
            </FactValue>
          </Fact>
        ))}
      </Facts>
      <Corner />
    </Quote>

    <PeriodTabs>
      <PeriodTab $active>
        分时
        <TabMark $top={11.5} $h={8} $color="#fb0024" />
      </PeriodTab>
      <PeriodTab>五日</PeriodTab>
      <PeriodTab>日K</PeriodTab>
      <PeriodTab>周K</PeriodTab>
      <PeriodTab>月K</PeriodTab>
      <PeriodTab>
        <Inline $gap={9}>
          周期
          <Triangle w={23} h={12} color="#333" />
        </Inline>
      </PeriodTab>
      <IconSlot $top={31} $left={33}>
        <HexIcon />
      </IconSlot>
    </PeriodTabs>

    <ChartTitle $h={53}>
      分时图
      <DropMark>
        <Triangle w={18} h={10} color="#999" />
      </DropMark>
    </ChartTitle>
    <ChartBox $h={668}>
      <PriceChart />
      <ChartLabel $y={11} $color="#dc2638">1521.93</ChartLabel>
      <ChartLabel $y={11} $color="#dc2638" $ls={0.2} $right>3.89%</ChartLabel>
      <ChartLabel $y={320} $color="#5c6b7b">1464.88</ChartLabel>
      <ChartLabel $y={653} $color={GREEN} $weight={500} $ls={-0.5}>1407.83</ChartLabel>
      <ChartLabel $y={653} $color={GREEN} $weight={500} $ls={0.6} $right>-3.89%</ChartLabel>
    </ChartBox>

    <ChartTitle $h={52}>
      成交量
      <DropMark>
        <Triangle w={18} h={10} color="#999" />
      </DropMark>
      <Legend $color={SLATE} $size={27} $gap={28}>
        量 <Strong>274.9</Strong>万
      </Legend>
      <Expand aria-label="全屏">
        <ExpandIcon />
      </Expand>
    </ChartTitle>
    <ChartBox $h={288}>
      <VolumeChart />
      <ChartLabel $y={12} $color={SLATE}>1323万</ChartLabel>
    </ChartBox>

    <ChartTitle $h={51} $top={1}>
      驱动力
      <DropMark>
        <Triangle w={18} h={10} color="#999" />
      </DropMark>
      <Legend $color="#545e6e" $size={24} $gap={10} $width={116}>主力净额</Legend>
      <Legend $color="#545e6e" $size={24} $gap={0} $width={85}><Strong>952</Strong>亿</Legend>
      <Legend $color="#aea406" $size={24} $gap={0} $width={117}>主买净额</Legend>
      <Legend $color="#aea406" $size={24} $gap={0} $width={98}><Strong>1690</Strong>亿</Legend>
      <Legend $color="#2a9a20" $size={24} $gap={0} $width={202}>分钟内主力净额</Legend>
      <Legend $color="#2a9a20" $size={24} $gap={0}><Strong>14.0</Strong>亿</Legend>
    </ChartTitle>
    <ChartBox $h={287}>
      <FlowChart />
      <ChartLabel $y={11} $color="#e8182c">1690亿</ChartLabel>
      <ChartLabel $y={128} $x={9} $color="#e8182c">852亿</ChartLabel>
      <ChartLabel $y={270} $color="#e8182c">14.2亿</ChartLabel>
      <Unlock>
        <LevelBadge>Level2</LevelBadge>
        免费解锁
      </Unlock>
    </ChartBox>
    <TimeAxis>
      <span>09:30</span>
      <span>11:30</span>
      <span>15:00</span>
    </TimeAxis>

    <FeatureBar>
      <Inline $gap={9}>
        特色
        <IconSlot $top={11}>
          <Triangle w={21} h={13} color="#999" />
        </IconSlot>
      </Inline>
      <Divider />
      <Feature $gap={46}>多空指标</Feature>
      <Feature $gap={44}>涨跌率</Feature>
      <Feature $gap={51} $color="#e0162b">
        <VipIcon />
        驱动力
      </Feature>
      <Feature $gap={51}>
        <VipIcon />
        博弈
      </Feature>
      <Feature $gap={50} $weight={500}>
        <VipIcon />
        DDX
      </Feature>
      <Feature $gap={49}>
        <VipIcon />
      </Feature>
    </FeatureBar>
    <Band />

    <SectionTabs>
      {SECTIONS.map((s) => (
        <SectionTab key={s} $active={s === "成份股"} $bold={s === "F10"}>
          {s}
          {s === "成份股" && <TabMark $top={0} $h={6} $color="#ec0c24" />}
        </SectionTab>
      ))}
    </SectionTabs>
    <Cards>
      <Card $tint="#f4f4f4" />
      <Card $tint="#fff1f1" />
      <Card $tint="#f4f4f4" />
    </Cards>

    <BottomNav>
      <IndexQuote>
        <Triangle w={19} h={11} color="#999" up />
        <IndexValue>3995.00</IndexValue>
        <Inline $gap={8}>
          上证
          <IndexChange>2.70%</IndexChange>
        </Inline>
      </IndexQuote>
      {ACTIONS.map((a) => (
        <NavItem key={a.label}>
          <NavIcon>{a.icon}</NavIcon>
          {a.label}
        </NavItem>
      ))}
    </BottomNav>
    <HomeBars>
      <HomeBar $radius="4px 0 0 4px" />
      <HomeBar $radius="0" />
      <HomeBar $radius="0 4px 4px 0" />
    </HomeBars>
  </Page>
);

export default App;
